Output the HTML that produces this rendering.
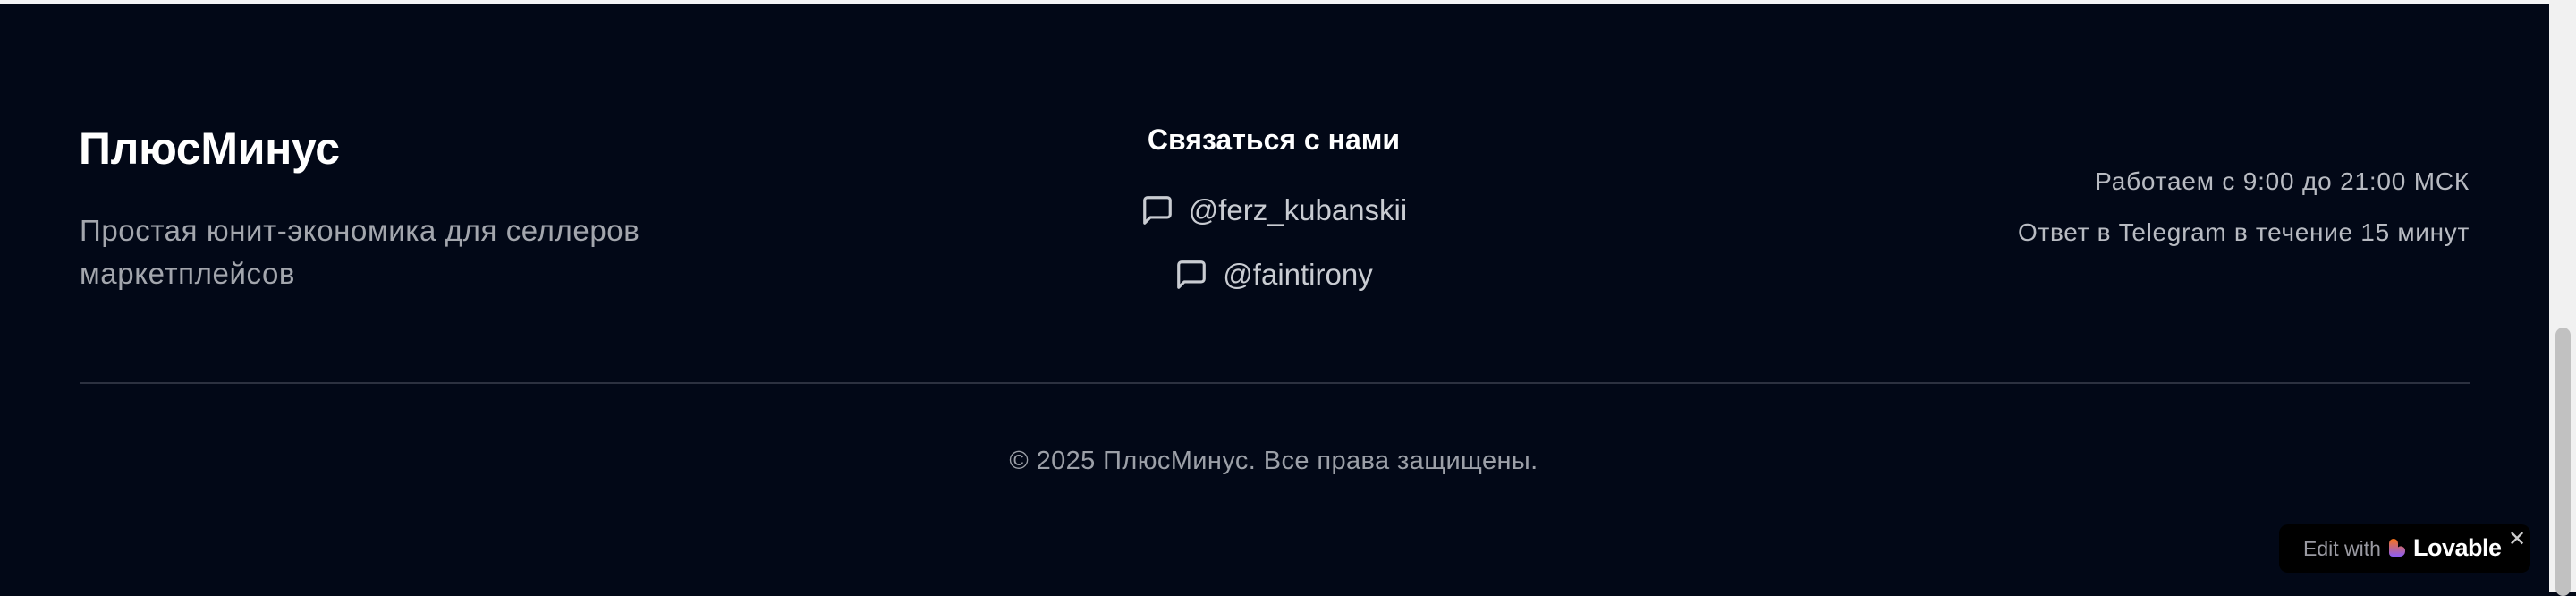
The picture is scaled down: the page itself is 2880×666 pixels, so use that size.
<!DOCTYPE html>
<html><head><meta charset="utf-8"><style>
*{margin:0;padding:0;box-sizing:border-box}
html,body{width:2880px;height:662px;overflow:hidden;background:#020817;font-family:"Liberation Sans",sans-serif}
.top{position:absolute;left:0;top:0;width:2850px;height:5px;background:#f3f4f6}
.sb{position:absolute;left:2850px;top:0;width:30px;height:662px;background:#f1f1f1}
.thumb{position:absolute;left:2857px;top:366px;width:17px;height:300px;background:#c1c1c1;border-radius:9px}
.title{position:absolute;left:88px;top:137px;font-size:50px;font-weight:bold;color:#fff;letter-spacing:-0.3px}
.desc{position:absolute;left:89px;top:234px;font-size:33px;line-height:48px;color:#a3a6ad;letter-spacing:0.6px}
.mid{position:absolute;left:0;width:2848px;text-align:center}
.h{top:138px;font-size:32px;font-weight:bold;color:#fff}
.item{font-size:33px;color:#c9ccd2;display:flex;justify-content:center;align-items:center;gap:16px}
.right{position:absolute;right:119px;text-align:right;font-size:28px;color:#b8bbc2}
.hr{position:absolute;left:89px;top:427px;width:2672px;height:2px;background:#2c3140}
.copy{top:499px;font-size:29px;color:#9ca0a8;letter-spacing:0.4px}
.badge{position:absolute;left:2548px;top:586px;width:281px;height:54px;background:#000;border-radius:10px}
</style></head><body>
<div class="top"></div>
<div class="title">ПлюсМинус</div>
<div class="desc">Простая юнит-экономика для селлеров<br>маркетплейсов</div>
<div class="mid h">Связаться с нами</div>
<div class="mid item" style="top:216px"><svg width="38" height="38" viewBox="0 0 24 24" fill="none" stroke="#c9ccd2" stroke-width="2" stroke-linecap="round" stroke-linejoin="round"><path d="M21 15a2 2 0 0 1-2 2H7l-4 4V5a2 2 0 0 1 2-2h14a2 2 0 0 1 2 2z"/></svg><span>@ferz_kubanskii</span></div>
<div class="mid item" style="top:288px"><svg width="38" height="38" viewBox="0 0 24 24" fill="none" stroke="#c9ccd2" stroke-width="2" stroke-linecap="round" stroke-linejoin="round"><path d="M21 15a2 2 0 0 1-2 2H7l-4 4V5a2 2 0 0 1 2-2h14a2 2 0 0 1 2 2z"/></svg><span>@faintirony</span></div>
<div class="right" style="top:187px;letter-spacing:0.8px">Работаем с 9:00 до 21:00 МСК</div>
<div class="right" style="top:244px;letter-spacing:0.7px">Ответ в Telegram в течение 15 минут</div>
<div class="hr"></div>
<div class="mid copy">© 2025 ПлюсМинус. Все права защищены.</div>
<div class="badge">
<span style="position:absolute;left:27px;top:14px;font-size:23px;color:#9a9aa2">Edit with</span>
<svg style="position:absolute;left:122px;top:15px" width="24" height="24" viewBox="0 0 24 24"><defs><linearGradient id="g" x1="0" y1="0" x2="0" y2="1"><stop offset="0" stop-color="#f97316"/><stop offset="1" stop-color="#8b5cf6"/></linearGradient></defs><path d="M1 6a5 5 0 0 1 10 0v4.5a5 5 0 0 1 8 4.5a6 6 0 0 1-6 6H5a4 4 0 0 1-4-4z" fill="url(#g)"/></svg>
<span style="position:absolute;left:150px;top:11px;font-size:27px;font-weight:bold;color:#fff;letter-spacing:-0.5px">Lovable</span>
<span style="position:absolute;left:256px;top:2px;font-size:24px;color:#ccc">✕</span>
</div>
<div class="sb"></div><div class="thumb"></div>
</body></html>
